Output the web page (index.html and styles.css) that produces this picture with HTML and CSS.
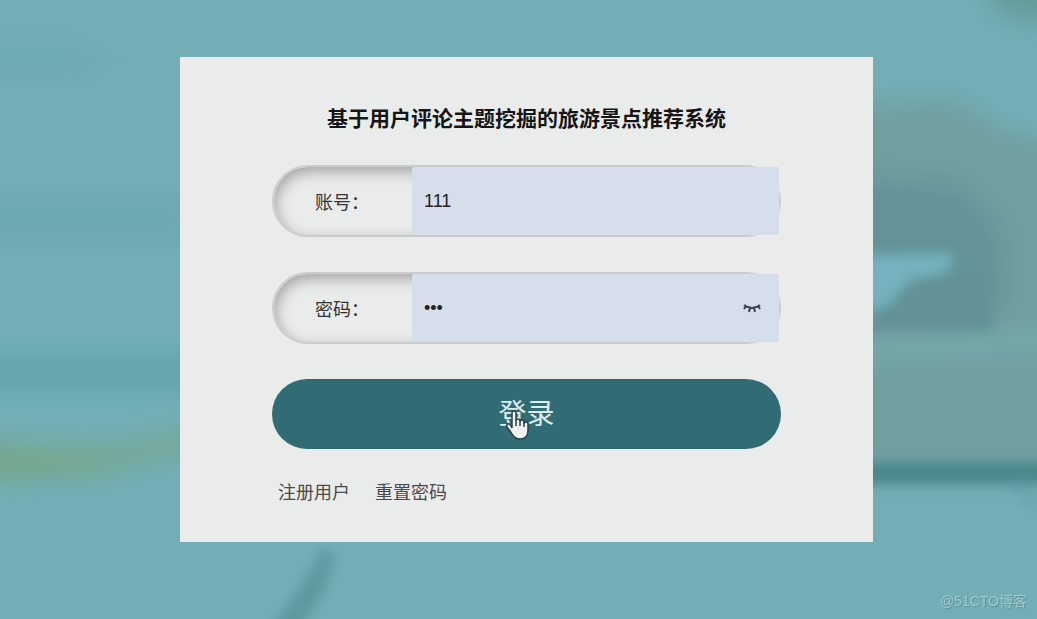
FILE: index.html
```
<!DOCTYPE html>
<html lang="zh-CN">
<head>
    <meta charset="UTF-8">
    <meta name="viewport" content="width=device-width, initial-scale=1.0">
    <title>基于用户评论主题挖掘的旅游景点推荐系统</title>
    <link rel="stylesheet" href="styles.css">
</head>
<body>

    <!-- blurred lake behind the form -->
    <svg class="scene" viewBox="0 0 1037 619" preserveAspectRatio="none" aria-hidden="true">
        <defs>
            <filter id="soft" filterUnits="userSpaceOnUse" x="-100" y="-100" width="1237" height="819"><feGaussianBlur stdDeviation="14"/></filter>
            <filter id="edge" filterUnits="userSpaceOnUse" x="-100" y="-100" width="1237" height="819"><feGaussianBlur stdDeviation="6"/></filter>
        </defs>
        <rect width="1037" height="619" fill="#73aeb7"/>
        <g filter="url(#soft)">
            <path d="M-60 50H100V72H-60z M-60 200H200V240H-60z" fill="#6da8b0"/>
            <path d="M-60 360H240V386H-60z" fill="#619fa8"/>
            <path d="M-60 442L110 450L200 430V446L90 474L-60 480z" fill="#75a684"/>
            <path d="M960 -60H1100V30L1000 15z" fill="#649a98"/>
            <path d="M820 105L960 100L1000 130L1100 150V475H820z" fill="#719f9f"/>
            <path d="M820 175L960 185L1000 230V320H820z" fill="#649397"/>
            <path d="M820 342L1100 325V350L820 362z" fill="#74abad"/>
        </g>
        <g filter="url(#edge)">
            <path d="M850 256L954 253L948 272L910 280L885 308L850 312z" fill="#74b2be"/>
            <path d="M880 312L915 284L950 272L990 268L992 330H850z" fill="#629297"/>
            <path d="M850 462H1060V484H850z" fill="#4a878b"/>
            <path d="M1008 484H1037V515L1022 505z" fill="#6ca6ad"/>
            <path d="M322 550L336 552L326 588L294 640H262L298 590z" fill="#5f999f"/>
        </g>
    </svg>

    <main class="login">
        <form class="login-form">
            <h1>基于用户评论主题挖掘的旅游景点推荐系统</h1>

            <div class="field">
                <label for="username">账号：</label>
                <input type="text" id="username" value="111">
            </div>

            <div class="field">
                <label for="password">密码：</label>
                <input type="password" id="password" value="111">
                <button type="button" class="eye" aria-label="显示密码">
                    <svg viewBox="0 0 18 10" aria-hidden="true">
                        <path d="M1 2Q9 8 17 2M3 3L1 6M7 5L6 9M11 5L12 9M15 3L17 6"/>
                    </svg>
                </button>
            </div>

            <button type="button" class="submit">
                登录
                <svg class="hand" viewBox="0 0 24 31" aria-hidden="true">
                    <path d="M7 18V3Q7 1 9 1T11 3V11Q11 9 13 9T15 11V12Q15 10 17 10T19 12V14Q19 12 21 12T23 14V20C23 26 20 29 15 29C10 29 8 26 5 21L2 17Q1 15 3 14T7 18z"/>
                    <path class="fingers" d="M11 10V16M15 11V16M19 13V17"/>
                </svg>
            </button>

            <div class="links">
                <a href="#">注册用户</a>
                <a href="#">重置密码</a>
            </div>
        </form>
    </main>

    <p class="watermark">@51CTO博客</p>

</body>
</html>
```
FILE: styles.css
```
*{
    margin: 0;
    padding: 0;
    box-sizing: border-box;
}

body{
    min-height: 100vh;
    background-color: #73aeb7;
    color: #333;
    font-family: "Noto Sans CJK SC", sans-serif;
    font-size: 18px;
}

.scene{
    position: fixed;
    top: 0;
    left: 0;
    width: 100%;
    height: 100%;
    z-index: -1;
}

.login{
    padding: 57px 164px 0 180px;
}

.login-form{
    display: flex;
    flex-direction: column;
    gap: 35px;
    padding: 47px 92px 37px;
    background-color: #eaebeb;
}

h1{
    color: #151515;
    font-size: 21px;
    line-height: 26px;
    text-align: center;
    white-space: nowrap;
}

.field{
    position: relative;
    display: flex;
    height: 72px;
    border: 2px solid #cbcccd;
    border-radius: 36px;
    box-shadow: inset 2px 5px 14px #a4a4a4;
}

.field label{
    width: 138px;
    padding-left: 41px;
    line-height: 68px;
    flex-shrink: 0;
}

.field input{
    flex: 1;
    min-width: 0;
    padding: 0 12px;
    border: none;
    border-radius: 2px;
    outline: none;
    background-color: #d6deeb;
    color: #222;
    font-family: "Liberation Sans", "Noto Sans CJK SC", sans-serif;
    font-size: 18px;
}

/* sits on top of the password box */
.eye{
    position: absolute;
    top: 50%;
    right: 18px;
    width: 18px;
    height: 10px;
    margin-top: -5px;
    border: none;
    background: none;
    cursor: pointer;
}

.eye svg{
    display: block;
    fill: none;
    stroke: #3b424b;
    stroke-width: 2;
}

.submit{
    position: relative;
    height: 70px;
    padding-bottom: 4px;
    border: none;
    border-radius: 35px;
    background-color: #316c74;
    color: #dfeaec;
    font-family: inherit;
    font-size: 28px;
    cursor: pointer;
}

.hand{
    position: absolute;
    top: 31px;
    left: 50%;
    width: 24px;
    height: 31px;
    margin-left: -22px;
    fill: #eef1f2;
    stroke: #2f4047;
    stroke-width: 1.5;
}

.hand .fingers{
    fill: none;
}

.links{
    display: flex;
    gap: 25px;
    padding-left: 6px;
    margin-top: -7px;
    line-height: 28px;
}

.links a{
    color: #4a4a4a;
    text-decoration: none;
}

.watermark{
    position: fixed;
    right: 10px;
    bottom: 8px;
    color: #a3c8cd;
    font-family: "Liberation Sans", "Noto Sans CJK SC", sans-serif;
    font-size: 14px;
    line-height: 20px;
    text-shadow: 1px 1px 1px #5b8f97;
}
```
